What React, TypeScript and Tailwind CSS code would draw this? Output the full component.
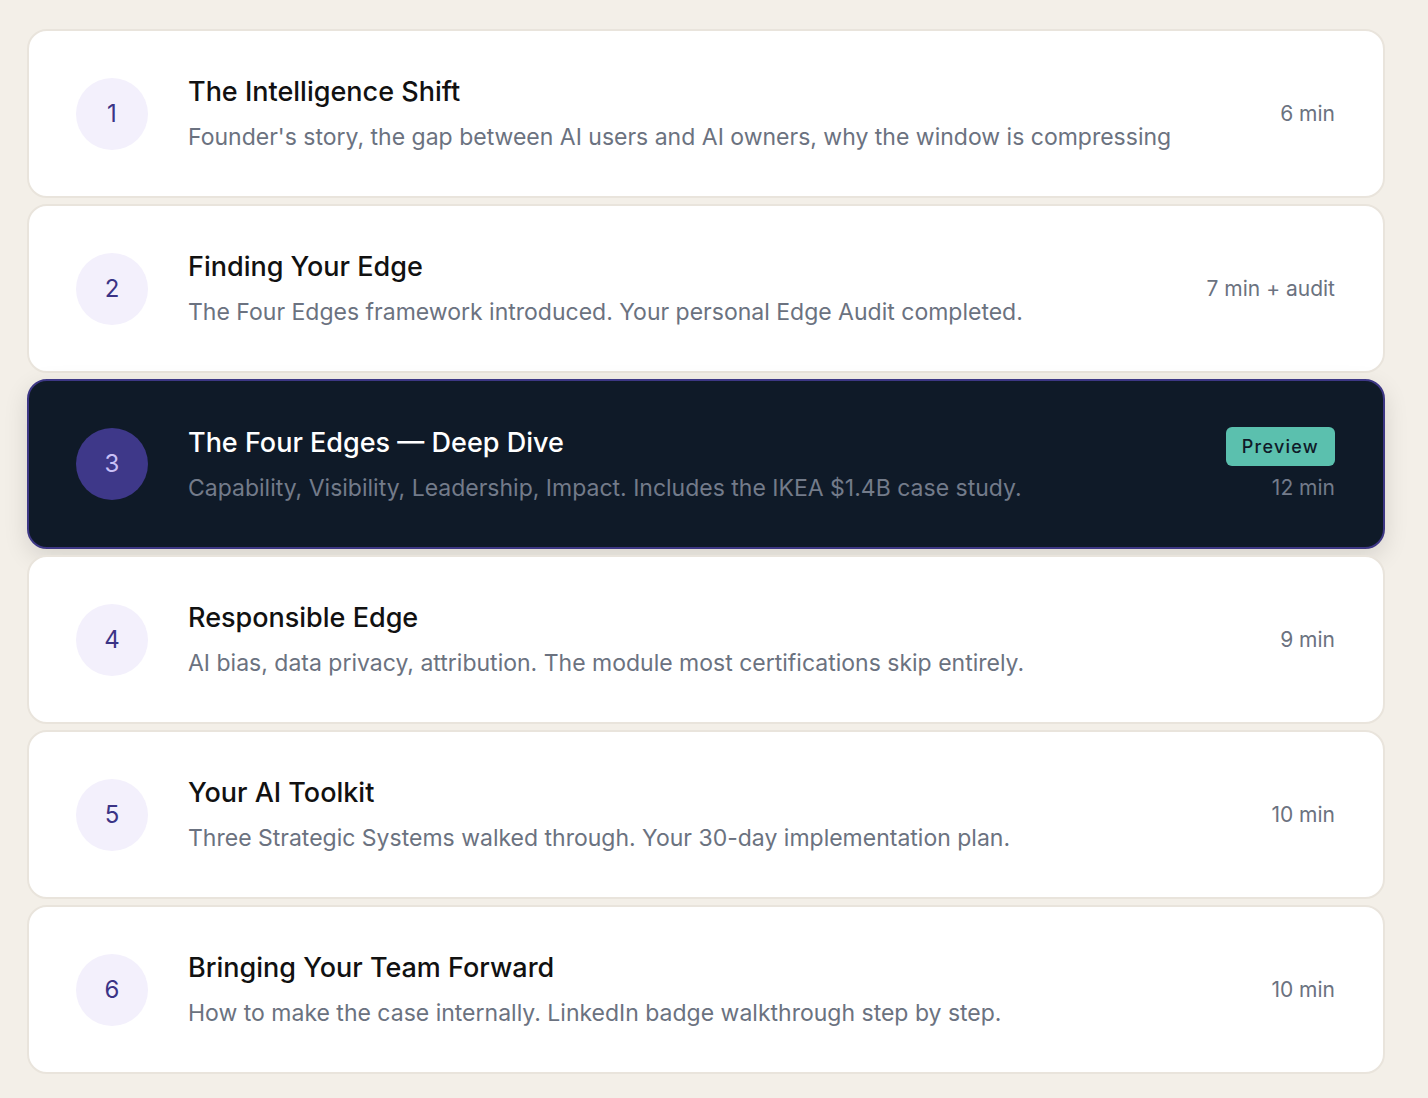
const modules = [
  {
    n: 1,
    title: "The Intelligence Shift",
    desc: "Founder's story, the gap between AI users and AI owners, why the window is compressing",
    time: "6 min",
  },
  {
    n: 2,
    title: "Finding Your Edge",
    desc: "The Four Edges framework introduced. Your personal Edge Audit completed.",
    time: "7 min + audit",
  },
  {
    n: 3,
    title: "The Four Edges — Deep Dive",
    desc: "Capability, Visibility, Leadership, Impact. Includes the IKEA $1.4B case study.",
    time: "12 min",
    preview: true,
  },
  {
    n: 4,
    title: "Responsible Edge",
    desc: "AI bias, data privacy, attribution. The module most certifications skip entirely.",
    time: "9 min",
  },
  {
    n: 5,
    title: "Your AI Toolkit",
    desc: "Three Strategic Systems walked through. Your 30-day implementation plan.",
    time: "10 min",
  },
  {
    n: 6,
    title: "Bringing Your Team Forward",
    desc: "How to make the case internally. LinkedIn badge walkthrough step by step.",
    time: "10 min",
  },
];

export default function App() {
  return (
    <div
      className="min-h-screen bg-[#f3efe8] pl-[27px] pr-[43px] pt-[29px] pb-6"
      style={{ fontFamily: "Inter, 'Noto Sans', sans-serif" }}
    >
      <div className="flex flex-col gap-[6px]">
        {modules.map((m) => {
          const active = !!m.preview;
          return (
            <div
              key={m.n}
              className={
                active
                  ? "flex h-[170px] items-center rounded-[20px] border-2 border-[#3d3785] bg-[#0f1a28] pl-[47px] pr-[48px] shadow-[0_8px_24px_rgba(0,0,0,0.12)]"
                  : "flex h-[169px] items-center rounded-[20px] border-2 border-[#e9e4dc] bg-white pl-[47px] pr-[48px]"
              }
            >
              <div
                className={
                  active
                    ? "flex h-[72px] w-[72px] shrink-0 items-center justify-center rounded-full bg-[#3e3889] text-[24px] text-[#c9c0f7]"
                    : "flex h-[72px] w-[72px] shrink-0 items-center justify-center rounded-full bg-[#f3f0fc] text-[24px] text-[#3b3486]"
                }
              >
                {m.n}
              </div>
              <div className="ml-[40px] flex-1">
                <h3
                  className={
                    active
                      ? "text-[27px] leading-[34px] font-medium text-white"
                      : "text-[27px] leading-[34px] font-medium text-[#111111]"
                  }
                >
                  {m.title}
                </h3>
                <p
                  className={
                    active
                      ? "mt-[13px] text-[23px] leading-[30px] text-[#737b8a]"
                      : "mt-[13px] text-[23px] leading-[30px] text-[#6b7280]"
                  }
                >
                  {m.desc}
                </p>
              </div>
              <div className="flex flex-col items-end gap-[8px]">
                {active && (
                  <span className="rounded-[6px] bg-[#5bc0ae] px-[16px] py-[6px] text-[18px] leading-[27px] font-medium tracking-[0.07em] text-[#0f1a28]">
                    Preview
                  </span>
                )}
                <span
                  className={
                    active
                      ? "text-[21px] leading-[28px] text-[#737b8a]"
                      : "text-[21px] leading-[28px] text-[#6b7280]"
                  }
                >
                  {m.time}
                </span>
              </div>
            </div>
          );
        })}
      </div>
    </div>
  );
}
